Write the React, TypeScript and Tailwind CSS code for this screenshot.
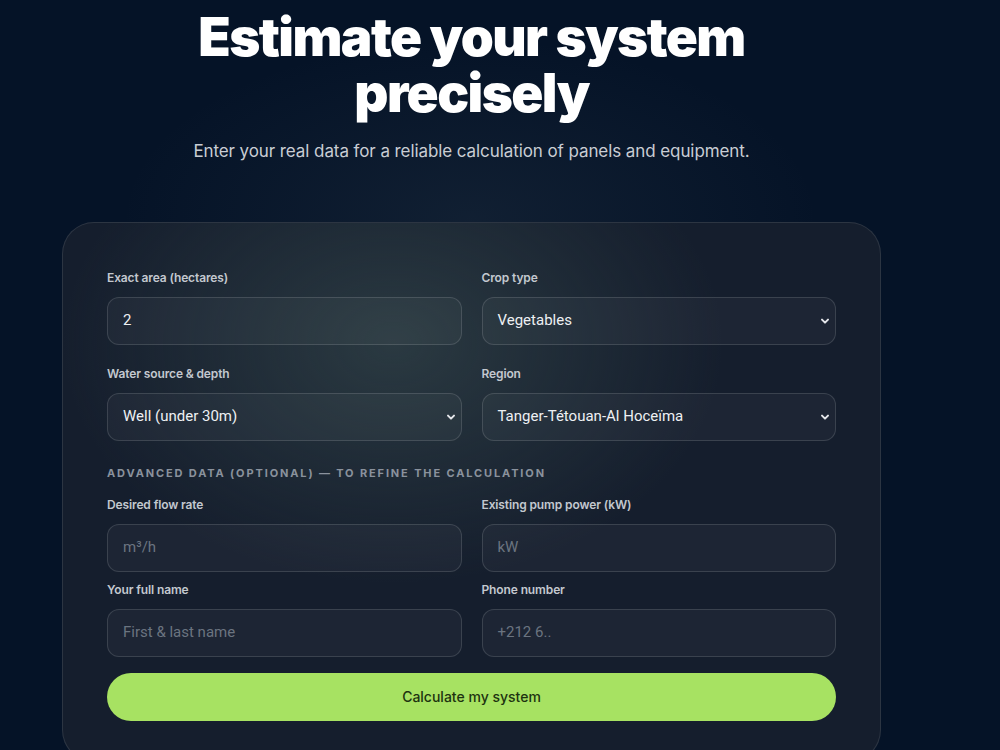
import React from "react";

function Chevron() {
  return (
    <svg width="10" height="10" viewBox="0 0 10 10" className="absolute right-[5px] top-1/2 -translate-y-1/2" fill="none">
      <path d="M2 3.6 L5 6.6 L8 3.6" stroke="#e5e7eb" strokeWidth="2" strokeLinecap="round" strokeLinejoin="round" />
    </svg>
  );
}

function Label({ children }: { children: React.ReactNode }) {
  return (
    <div className="text-[12px] leading-4 font-semibold text-[#c3c8cf] tracking-[-0.01em] mb-[11px]">
      {children}
    </div>
  );
}

const fieldFont = { fontFamily: "Roboto, 'Noto Sans', sans-serif" };

function TextField({ value, placeholder }: { value?: string; placeholder?: string }) {
  return (
    <div
      className="h-12 rounded-xl border border-white/[0.13] bg-white/[0.035] flex items-center pl-[15px] pr-4 text-[15px]"
      style={fieldFont}
    >
      {value ? (
        <span className="text-[#eef0f3]">{value}</span>
      ) : (
        <span className="text-[#6b7480]">{placeholder}</span>
      )}
    </div>
  );
}

function SelectField({ value }: { value: string }) {
  return (
    <div
      className="relative h-12 rounded-xl border border-white/[0.13] bg-white/[0.035] flex items-center pl-[15px] pr-4 text-[15px] text-[#eef0f3]"
      style={fieldFont}
    >
      <span>{value}</span>
      <Chevron />
    </div>
  );
}

export default function App() {
  return (
    <div
      className="min-h-[750px] h-[750px] overflow-hidden bg-[#051327] text-white"
      style={{ fontFamily: "Inter, 'Noto Sans', sans-serif" }}
    >
      <div className="relative h-full">
        <div className="pointer-events-none absolute inset-0 bg-[radial-gradient(ellipse_500px_260px_at_470px_220px,rgba(120,140,150,0.10),transparent_70%)]" />
        <div className="relative ml-[62px] w-[819px] flex flex-col items-center">
          <h1 className="mt-[9px] text-center text-[53px] leading-[56px] font-black tracking-[-0.03em] text-white">
            Estimate your system
            <br />
            precisely
          </h1>
          <p className="mt-[18px] text-[17px] text-[#c9cdd4] tracking-[-0.005em]">
            Enter your real data for a reliable calculation of panels and equipment.
          </p>

          <div className="mt-[57px] w-full rounded-[32px] border border-white/[0.1] bg-[#151e2d] bg-[radial-gradient(ellipse_440px_320px_at_330px_120px,rgba(60,80,82,0.55),transparent_75%)] px-[44px] pt-[47px] pb-10">
            <div className="grid grid-cols-2 gap-x-5">
              <div>
                <Label>Exact area (hectares)</Label>
                <TextField value="2" />
              </div>
              <div>
                <Label>Crop type</Label>
                <SelectField value="Vegetables" />
              </div>
            </div>

            <div className="grid grid-cols-2 gap-x-5 mt-[21px]">
              <div>
                <Label>Water source &amp; depth</Label>
                <SelectField value="Well (under 30m)" />
              </div>
              <div>
                <Label>Region</Label>
                <SelectField value="Tanger-Tétouan-Al Hoceïma" />
              </div>
            </div>

            <div className="mt-[24px] text-[11px] leading-4 font-bold tracking-[0.17em] text-[#8a929d] uppercase">
              Advanced data (optional) — to refine the calculation
            </div>

            <div className="grid grid-cols-2 gap-x-5 mt-[16px]">
              <div>
                <Label>Desired flow rate</Label>
                <TextField placeholder="m³/h" />
              </div>
              <div>
                <Label>Existing pump power (kW)</Label>
                <TextField placeholder="kW" />
              </div>
            </div>

            <div className="grid grid-cols-2 gap-x-5 mt-[10px]">
              <div>
                <Label>Your full name</Label>
                <TextField placeholder="First & last name" />
              </div>
              <div>
                <Label>Phone number</Label>
                <TextField placeholder="+212 6.." />
              </div>
            </div>

            <button className="mt-4 h-12 w-full rounded-full bg-[#a7e262] text-[14px] font-medium text-[#1d3310]">
              Calculate my system
            </button>
          </div>
        </div>
      </div>
    </div>
  );
}
